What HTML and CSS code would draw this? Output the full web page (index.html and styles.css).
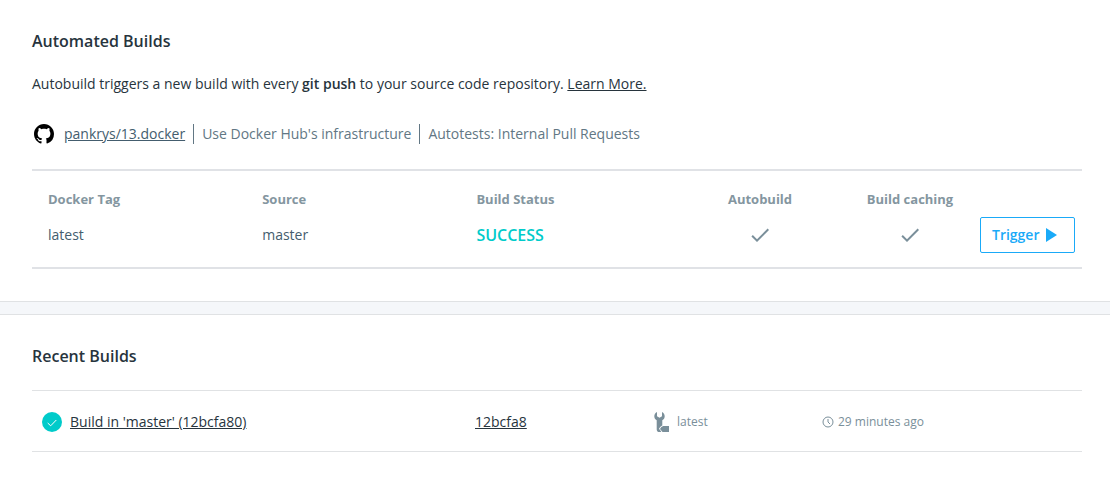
FILE: index.html
```html
<!DOCTYPE html>
<html lang="en">
<head>
<meta charset="utf-8">
<title>Builds</title>
<link rel="stylesheet" href="styles.css">
</head>
<body>
<main>
  <section class="panel">
    <h2 class="title">Automated Builds</h2>
    <p class="intro">Autobuild triggers a new build with every <strong>git push</strong> to your source code repository. <a href="#">Learn More.</a></p>
    <div class="repo">
      <svg class="github" viewBox="0 0 16 16" aria-hidden="true"><path fill-rule="evenodd" d="M8 0C3.58 0 0 3.58 0 8c0 3.54 2.29 6.53 5.47 7.59.4.07.55-.17.55-.38 0-.19-.01-.82-.01-1.49-2.01.37-2.53-.49-2.69-.94-.09-.23-.48-.94-.82-1.13-.28-.15-.68-.52-.01-.53.63-.01 1.08.58 1.23.82.72 1.21 1.87.87 2.33.66.07-.52.28-.87.51-1.07-1.78-.2-3.64-.89-3.64-3.95 0-.87.31-1.59.82-2.15-.08-.2-.36-1.02.08-2.12 0 0 .67-.21 2.2.82.64-.18 1.32-.27 2-.27s1.36.09 2 .27c1.53-1.04 2.2-.82 2.2-.82.44 1.1.16 1.92.08 2.12.51.56.82 1.27.82 2.15 0 3.07-1.87 3.75-3.65 3.95.29.25.54.73.54 1.48 0 1.07-.01 1.93-.01 2.2 0 .21.15.46.55.38A8.01 8.01 0 0 0 16 8c0-4.42-3.58-8-8-8z"/></svg>
      <ul class="facts">
        <li><a href="#">pankrys/13.docker</a></li>
        <li>Use Docker Hub's infrastructure</li>
        <li>Autotests: Internal Pull Requests</li>
      </ul>
    </div>
    <table class="rules">
      <thead>
        <tr>
          <th class="col-text">Docker Tag</th>
          <th class="col-text">Source</th>
          <th>Build Status</th>
          <th class="col-auto">Autobuild</th>
          <th class="col-cache">Build caching</th>
          <td class="col-action"></td>
        </tr>
      </thead>
      <tbody>
        <tr>
          <td>latest</td>
          <td>master</td>
          <td class="success">SUCCESS</td>
          <td class="col-auto"><svg class="tick" viewBox="0 0 24 24" role="img" aria-label="On"><path d="M9 16.17 4.83 12l-1.42 1.41L9 19 21 7l-1.41-1.41z"/></svg></td>
          <td class="col-cache"><svg class="tick" viewBox="0 0 24 24" role="img" aria-label="On"><path d="M9 16.17 4.83 12l-1.42 1.41L9 19 21 7l-1.41-1.41z"/></svg></td>
          <td class="col-action"><button class="trigger" type="button">Trigger <svg class="play" viewBox="0 0 11 14" aria-hidden="true"><path d="M0 0 11 7 0 14z"/></svg></button></td>
        </tr>
      </tbody>
    </table>
  </section>
  <section class="panel">
    <h2 class="title">Recent Builds</h2>
    <ul class="builds">
      <li class="build">
        <div class="build-name">
          <svg class="badge" viewBox="0 0 20 20" role="img" aria-label="Succeeded"><circle cx="10" cy="10" r="10"/><path d="m5.700 11 3 2.800L14.300 8"/></svg>
          <a href="#">Build in 'master' (12bcfa80)</a>
        </div>
        <a href="#">12bcfa8</a>
        <div class="meta meta-tag">
          <svg class="wrench" viewBox="0 0 15 20" aria-hidden="true"><path d="M3 0v4.200L5.500 5.800 8 4.200V0c1.700.8 2.700 2.400 2.700 4.200 0 1.800-.9 3.200-2.400 4v5.300c-1.300.5-2.500 1.700-3.300 3.200l2.300 3c-.5.200-1.100.3-1.800.3-1.700 0-2.800-1-2.800-2.600V8.200C1.200 7.400.3 6 .3 4.200.3 2.400 1.300.8 3 0z"/><path d="M9.300 14H15v6H8.500L6 16.900C6.800 15.500 7.800 14.500 9.300 14z"/></svg>
          latest
        </div>
        <div class="meta">
          <svg class="clock" viewBox="0 0 12 12" aria-hidden="true"><circle cx="6" cy="6" r="5"/><path d="M6 3v3l2 2"/></svg>
          29 minutes ago
        </div>
      </li>
    </ul>
  </section>
</main>
</body>
</html>
```
FILE: styles.css
```css
* { box-sizing: border-box; }

body {
  margin: 0;
  background: #fff;
  color: #27343d;
  font: 14px/20px "Open Sans", "Noto Sans", sans-serif;
}

main {
  display: grid;
  gap: 12px;
  background: #f5f7fa;
}

.panel {
  padding: 29px 28px 32px 32px;
  background: #fff;
  border-bottom: 1px solid #e0e2e4;
}

.panel + .panel {
  padding-bottom: 42px;
  border-top: 1px solid #e0e2e4;
  border-bottom: 0;
}

.title {
  margin: 0;
  font-size: 16px;
  line-height: 24px;
  font-weight: 600;
}

.intro { margin: 21px 0 0; }

strong { font-weight: 600; }

a {
  color: inherit;
  text-underline-offset: 1px;
}

.repo {
  display: flex;
  align-items: center;
  gap: 10px;
  margin: 30px 0 25px;
  padding-left: 2px;
  color: #627784;
}

.repo a { color: #445d6e; }

.github {
  width: 20px;
  height: 20px;
  fill: #000;
}

.facts {
  display: flex;
  margin: 0;
  padding: 0;
  list-style: none;
}

.facts li + li {
  margin-left: 8px;
  padding-left: 8px;
  border-left: 1px solid #627784;
}

.rules {
  width: 100%;
  table-layout: fixed;
  border-collapse: separate;
  border-spacing: 0;
  padding: 18px 0 14px;
  border-top: 2px solid #e0e2e6;
  border-bottom: 2px solid #e0e2e6;
  color: #445d6e;
}

.rules th,
.rules td {
  padding: 0 16px;
  text-align: left;
}

.rules th {
  padding-bottom: 8px;
  color: #8496a0;
  font-size: 13px;
  font-weight: 700;
}

.rules .col-text { width: 20.4%; }

.rules .col-auto {
  width: 160px;
  text-align: center;
}

.rules .col-cache {
  width: 140px;
  text-align: center;
}

.rules .col-action {
  width: 102px;
  padding: 0 7px 0 0;
}

.rules .success {
  color: #00cbca;
  font-size: 16px;
  font-weight: 600;
}

.tick {
  display: block;
  width: 24px;
  height: 24px;
  margin: 0 auto;
  fill: #7a8f9a;
}

.trigger {
  display: flex;
  align-items: center;
  gap: 7px;
  width: 100%;
  height: 36px;
  padding: 0 11px;
  background: #fff;
  border: 1px solid #1aaaf8;
  border-radius: 2px;
  color: #1aaaf8;
  font: inherit;
  font-weight: 600;
}

.play {
  width: 11px;
  height: 14px;
  fill: #1aaaf8;
}

.builds {
  margin: 22px 0 0;
  padding: 0;
  list-style: none;
}

.build {
  display: grid;
  grid-template-columns: 433fr 179fr 168fr 260fr;
  align-items: center;
  padding: 21px 0 19px 10px;
  border-top: 1px solid #e0e2e4;
  border-bottom: 1px solid #e0e2e4;
}

.build-name,
.meta {
  display: flex;
  align-items: center;
}

.build-name { gap: 8px; }

.badge {
  width: 20px;
  height: 20px;
  fill: #00cbca;
}

.badge path {
  fill: none;
  stroke: #fff;
}

.meta {
  gap: 4px;
  color: #7a8f9a;
  font-size: 12px;
}

.meta-tag { gap: 8px; }

.wrench {
  width: 15px;
  height: 20px;
  fill: #7a8f9a;
}

.clock {
  width: 12px;
  height: 12px;
  fill: none;
  stroke: #7a8f9a;
}
```
